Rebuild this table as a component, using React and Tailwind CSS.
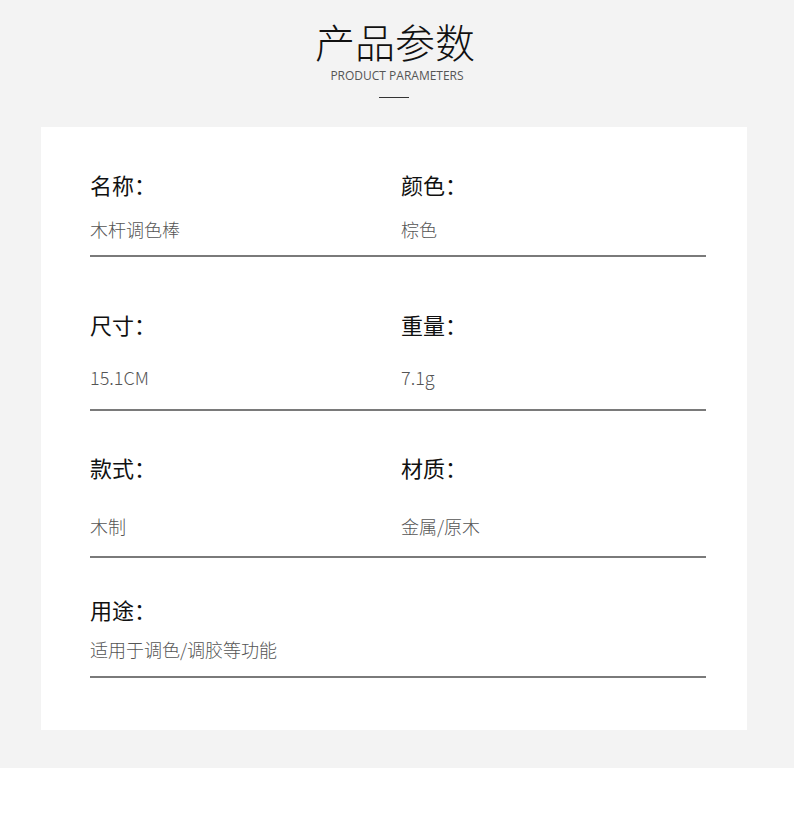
export default function App() {
  const font = { fontFamily: '"Noto Sans CJK SC", "Noto Sans", sans-serif' };
  const Line = () => <div className="h-[2px] bg-[#7a7a7a] w-[616px]" />;
  const Cell = ({ label, value, gap }) => (
    <div className="flex flex-col">
      <div className="text-[22px] leading-[30px] text-[#111]">{label}</div>
      <div className={`text-[18px] leading-[24px] font-light text-[#555] ${gap}`}>{value}</div>
    </div>
  );
  return (
    <div className="w-[800px] h-[838px] bg-white" style={font}>
      <div className="w-[794px] h-[768px] bg-[#f3f3f3] flex flex-col">
        <div className="flex flex-col items-center pt-[21px]">
          <div className="text-[40px] leading-[40px] font-extralight text-[#111] pr-[4px]">产品参数</div>
          <div className="text-[12px] leading-[14px] text-[#555] mt-[8px]" style={{ fontFamily: '"Open Sans", "Noto Sans", sans-serif' }}>PRODUCT PARAMETERS</div>
          <div className="w-[30px] h-px bg-[#333] mt-[14px] ml-[-6px]" />
        </div>
        <div className="ml-[41px] mt-[29px] w-[706px] h-[603px] bg-white pl-[49px] pt-[42px]">
          <div className="grid grid-cols-[311px_1fr] w-[616px]">
            <Cell label="名称：" value="木杆调色棒" gap="mt-[18px]" />
            <Cell label="颜色：" value="棕色" gap="mt-[18px]" />
          </div>
          <div className="mt-[14px]"><Line /></div>
          <div className="grid grid-cols-[311px_1fr] w-[616px] mt-[52px]">
            <Cell label="尺寸：" value="15.1CM" gap="mt-[26px]" />
            <Cell label="重量：" value="7.1g" gap="mt-[26px]" />
          </div>
          <div className="mt-[20px]"><Line /></div>
          <div className="grid grid-cols-[311px_1fr] w-[616px] mt-[41px]">
            <Cell label="款式：" value="木制" gap="mt-[32px]" />
            <Cell label="材质：" value="金属/原木" gap="mt-[32px]" />
          </div>
          <div className="mt-[18px]"><Line /></div>
          <div className="mt-[36px]">
            <Cell label="用途：" value="适用于调色/调胶等功能" gap="mt-[13px]" />
          </div>
          <div className="mt-[15px]"><Line /></div>
        </div>
      </div>
    </div>
  );
}
